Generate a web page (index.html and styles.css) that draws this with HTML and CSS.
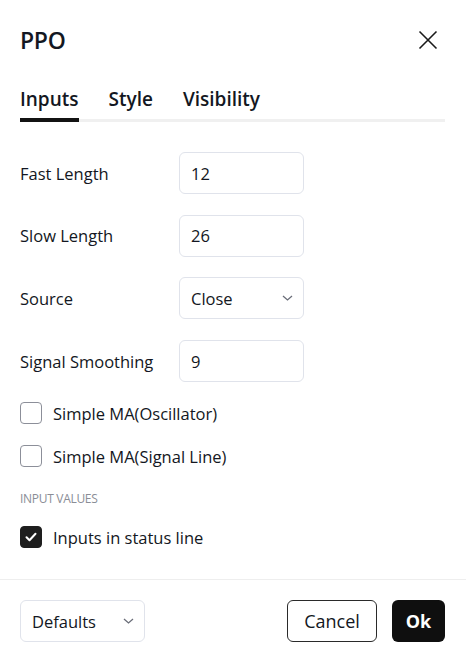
FILE: index.html
```html
<!DOCTYPE html>
<html lang="en">
<head>
    <meta charset="UTF-8">
    <meta name="viewport" content="width=device-width, initial-scale=1.0">
    <title>PPO</title>
    <link rel="stylesheet" href="styles.css">
</head>
<body>
    <div class="dialog">
        <div class="header">
            <h1>PPO</h1>
            <button class="close" aria-label="Close">
                <svg width="20" height="20" viewBox="0 0 20 20"><path d="M1.5 1.5l17 17M18.5 1.5l-17 17" stroke="#1a1a1a" stroke-width="1.6" fill="none"/></svg>
            </button>
        </div>

        <div class="tabs">
            <span class="tab active">Inputs</span>
            <span class="tab">Style</span>
            <span class="tab">Visibility</span>
        </div>

        <div class="content">
            <div class="fields">
                <label>Fast Length</label>
                <div class="field">12</div>
                <label>Slow Length</label>
                <div class="field">26</div>
                <label>Source</label>
                <div class="field select">Close
                    <svg class="chevron" width="11" height="6" viewBox="0 0 11 6"><path d="M1 1l4.5 4 4.5-4" stroke="#6a6d78" stroke-width="1.3" fill="none"/></svg>
                </div>
                <label>Signal Smoothing</label>
                <div class="field">9</div>
            </div>

            <div class="check-row"><span class="box"></span>Simple MA(Oscillator)</div>
            <div class="check-row"><span class="box"></span>Simple MA(Signal Line)</div>

            <div class="group-title">INPUT VALUES</div>

            <div class="check-row">
                <span class="box checked">
                    <svg width="12" height="10" viewBox="0 0 12 10"><path d="M1.5 5.2l3 3 6-6.5" stroke="#fff" stroke-width="2" fill="none" stroke-linecap="round" stroke-linejoin="round"/></svg>
                </span>Inputs in status line
            </div>
        </div>

        <div class="footer">
            <div class="field select defaults">Defaults
                <svg class="chevron" width="11" height="6" viewBox="0 0 11 6"><path d="M1 1l4.5 4 4.5-4" stroke="#6a6d78" stroke-width="1.3" fill="none"/></svg>
            </div>
            <div class="actions">
                <button class="btn cancel">Cancel</button>
                <button class="btn ok">Ok</button>
            </div>
        </div>
    </div>
</body>
</html>
```

FILE: styles.css
```css
/* General Styling */
body {
    margin: 0;
    padding: 0;
    font-family: 'Open Sans', 'Noto Sans', sans-serif;
    background: #ffffff;
    color: #131722;
}

.dialog {
    width: 466px;
    height: 659px;
    display: flex;
    flex-direction: column;
}

.header {
    display: flex;
    justify-content: space-between;
    align-items: center;
    padding: 24px 28px 0 20px;
    height: 32px;
}

h1 {
    margin: 0;
    font-size: 23px;
    font-weight: 600;
    letter-spacing: -0.3px;
}

.close {
    background: none;
    border: none;
    padding: 0;
    width: 20px;
    height: 20px;
    cursor: pointer;
}

.tabs {
    display: flex;
    gap: 30px;
    margin: 30px 21px 0 20px;
    border-bottom: 3px solid #f0f0f0;
}

.tab {
    font-size: 19px;
    font-weight: 600;
    line-height: 26px;
    padding-bottom: 6px;
    margin-bottom: -3px;
    border-bottom: 4px solid transparent;
}

.tab.active {
    border-bottom-color: #131313;
}

.content {
    padding: 30px 21px 0 20px;
    flex: 1;
}

.fields {
    display: grid;
    grid-template-columns: 159px 125px;
    row-gap: 20.7px;
    align-items: center;
}

.fields label {
    font-size: 16.5px;
}

.field {
    height: 42px;
    box-sizing: border-box;
    border: 1px solid #e0e3eb;
    border-radius: 6px;
    padding: 0 11px;
    display: flex;
    align-items: center;
    font-size: 16.5px;
}

.select {
    justify-content: space-between;
}

.chevron {
    margin-right: -1px;
}

.check-row {
    display: flex;
    align-items: center;
    height: 24px;
    font-size: 16.5px;
    margin-top: 19px;
}

.box {
    width: 22px;
    height: 22px;
    box-sizing: border-box;
    border: 1px solid #8c8f99;
    border-radius: 4px;
    margin-right: 11px;
    display: flex;
    align-items: center;
    justify-content: center;
}

.box.checked {
    background: #1e1e1e;
    border-color: #1e1e1e;
}

.group-title {
    font-size: 12px;
    color: #8a8d96;
    margin-top: 23px;
    letter-spacing: -0.3px;
    line-height: 16px;
}

.group-title + .check-row {
    margin-top: 18px;
}

.footer {
    border-top: 1px solid #eeeeee;
    display: flex;
    justify-content: space-between;
    align-items: center;
    padding: 20px 21px 17px 20px;
}

.defaults {
    width: 125px;
}

.actions {
    display: flex;
    gap: 15px;
}

.btn {
    height: 42px;
    border-radius: 6px;
    font-family: inherit;
    font-size: 18px;
    cursor: pointer;
}

.cancel {
    width: 90px;
    background: #ffffff;
    border: 1px solid #2a2a2a;
    color: #131722;
}

.ok {
    width: 53px;
    background: #0f0f0f;
    border: none;
    color: #ffffff;
    font-weight: 700;
}
```
